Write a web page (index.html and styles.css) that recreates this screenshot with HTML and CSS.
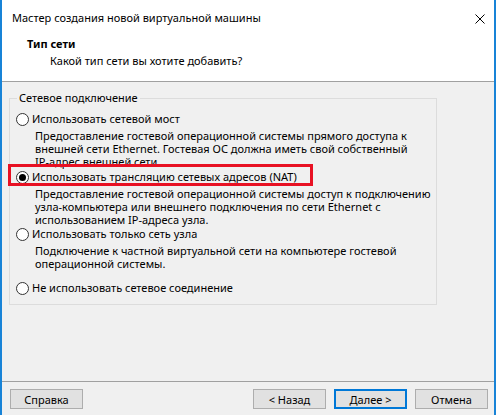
FILE: index.html
```html
<!DOCTYPE html>
<html>
<head>
    <title>Мастер создания новой виртуальной машины</title>
<link rel="stylesheet" href="styles.css">
</head>
<body>
    <div class="window">
        <div class="header">
            <div class="titlebar">
                <span class="title">Мастер создания новой виртуальной машины</span>
                <svg class="close" width="10" height="10" viewBox="0 0 10 10">
                    <path d="M0.5 0.5 L9.5 9.5 M9.5 0.5 L0.5 9.5" stroke="#000" stroke-width="1" fill="none"/>
                </svg>
            </div>
            <div class="page-title">Тип сети</div>
            <div class="page-subtitle">Какой тип сети вы хотите добавить?</div>
        </div>

        <div class="content">
            <fieldset class="group">
                <legend>Сетевое подключение</legend>

                <label class="option">
                    <span class="radio"></span>Использовать сетевой мост
                </label>
                <div class="desc">Предоставление гостевой операционной системы прямого доступа к<br>внешней сети Ethernet. Гостевая ОС должна иметь свой собственный<br>IP-адрес внешней сети.</div>

                <label class="option marked">
                    <span class="radio checked"></span>Использовать трансляцию сетевых адресов (NAT)
                    <!-- red annotation frame drawn over the NAT option -->
                    <span class="highlight"></span>
                </label>
                <div class="desc">Предоставление гостевой операционной системы доступ к подключению<br>узла-компьютера или внешнего подключения по сети Ethernet с<br>использованием IP-адреса узла.</div>

                <label class="option">
                    <span class="radio"></span>Использовать только сеть узла
                </label>
                <div class="desc">Подключение к частной виртуальной сети на компьютере гостевой<br>операционной системы.</div>

                <label class="option last">
                    <span class="radio"></span>Не использовать сетевое соединение
                </label>
            </fieldset>
        </div>

        <div class="footer">
            <button class="btn">Справка</button>
            <div class="nav-buttons">
                <button class="btn">&lt; Назад</button>
                <button class="btn default">Далее &gt;</button>
                <button class="btn">Отмена</button>
            </div>
        </div>
    </div>
</body>
</html>
```

FILE: styles.css
```css
/* Global Styles */
body {
    margin: 0;
    padding: 0;
    background-color: #f0f0f0;
    font-family: "Noto Sans", "Liberation Sans", sans-serif;
    font-size: 11px;
    color: #000;
}

.window {
    width: 496px;
    height: 415px;
    box-sizing: border-box;
    border-left: 2px solid #1883d7;
    border-right: 2px solid #1883d7;
    background-color: #f0f0f0;
    display: flex;
    flex-direction: column;
    white-space: nowrap;
}

/* Header */
.header {
    background-color: #fff;
    height: 81px;
    border-bottom: 1px solid #a0a0a0;
    box-sizing: content-box;
}

.titlebar {
    display: flex;
    justify-content: space-between;
    align-items: center;
    padding: 10px 9px 0 10px;
    height: 16px;
    line-height: 16px;
}

.close {
    margin-top: 2px;
}

.page-title {
    font-weight: bold;
    margin-top: 10px;
    padding-left: 25px;
    line-height: 16px;
    height: 17px;
}

.page-subtitle {
    padding-left: 48px;
    line-height: 16px;
}

/* Content */
.content {
    height: 299px;
    padding: 8px 0 0 7px;
    box-sizing: border-box;
}

.group {
    width: 414px;
    box-sizing: border-box;
    margin: 0;
    padding: 5px 6px 8px 6px;
    border: 1px solid #dcdcdc;
}

.group legend {
    padding: 0 2px;
    margin-left: 1px;
    line-height: 16px;
}

.option {
    display: flex;
    align-items: center;
    height: 16px;
    line-height: 16px;
}

.option.marked {
    position: relative;
    margin-top: 1px;
}

.option.last {
    margin-top: 10px;
}

.radio {
    width: 13px;
    height: 13px;
    box-sizing: border-box;
    border: 1px solid #333;
    border-radius: 50%;
    background-color: #fff;
    margin-right: 3px;
    display: flex;
    align-items: center;
    justify-content: center;
}

.radio.checked::after {
    content: "";
    width: 7px;
    height: 7px;
    border-radius: 50%;
    background-color: #000;
}

.desc {
    margin-top: 2px;
    padding-left: 19px;
    line-height: 13px;
}

.highlight {
    position: absolute;
    left: -8px;
    top: -5px;
    width: 305px;
    height: 22px;
    box-sizing: border-box;
    border: 3px solid #e81123;
}

/* Footer */
.footer {
    border-top: 1px solid #a0a0a0;
    padding: 7px 6px 0 8px;
    display: flex;
    justify-content: space-between;
}

.nav-buttons {
    display: flex;
    gap: 8px;
}

.btn {
    width: 73px;
    height: 20px;
    padding: 0;
    box-sizing: border-box;
    background-color: #e1e1e1;
    border: 1px solid #adadad;
    font-family: "Noto Sans", "Liberation Sans", sans-serif;
    font-size: 11px;
    color: #000;
}

.btn.default {
    border: 2px solid #0078d7;
}
```
